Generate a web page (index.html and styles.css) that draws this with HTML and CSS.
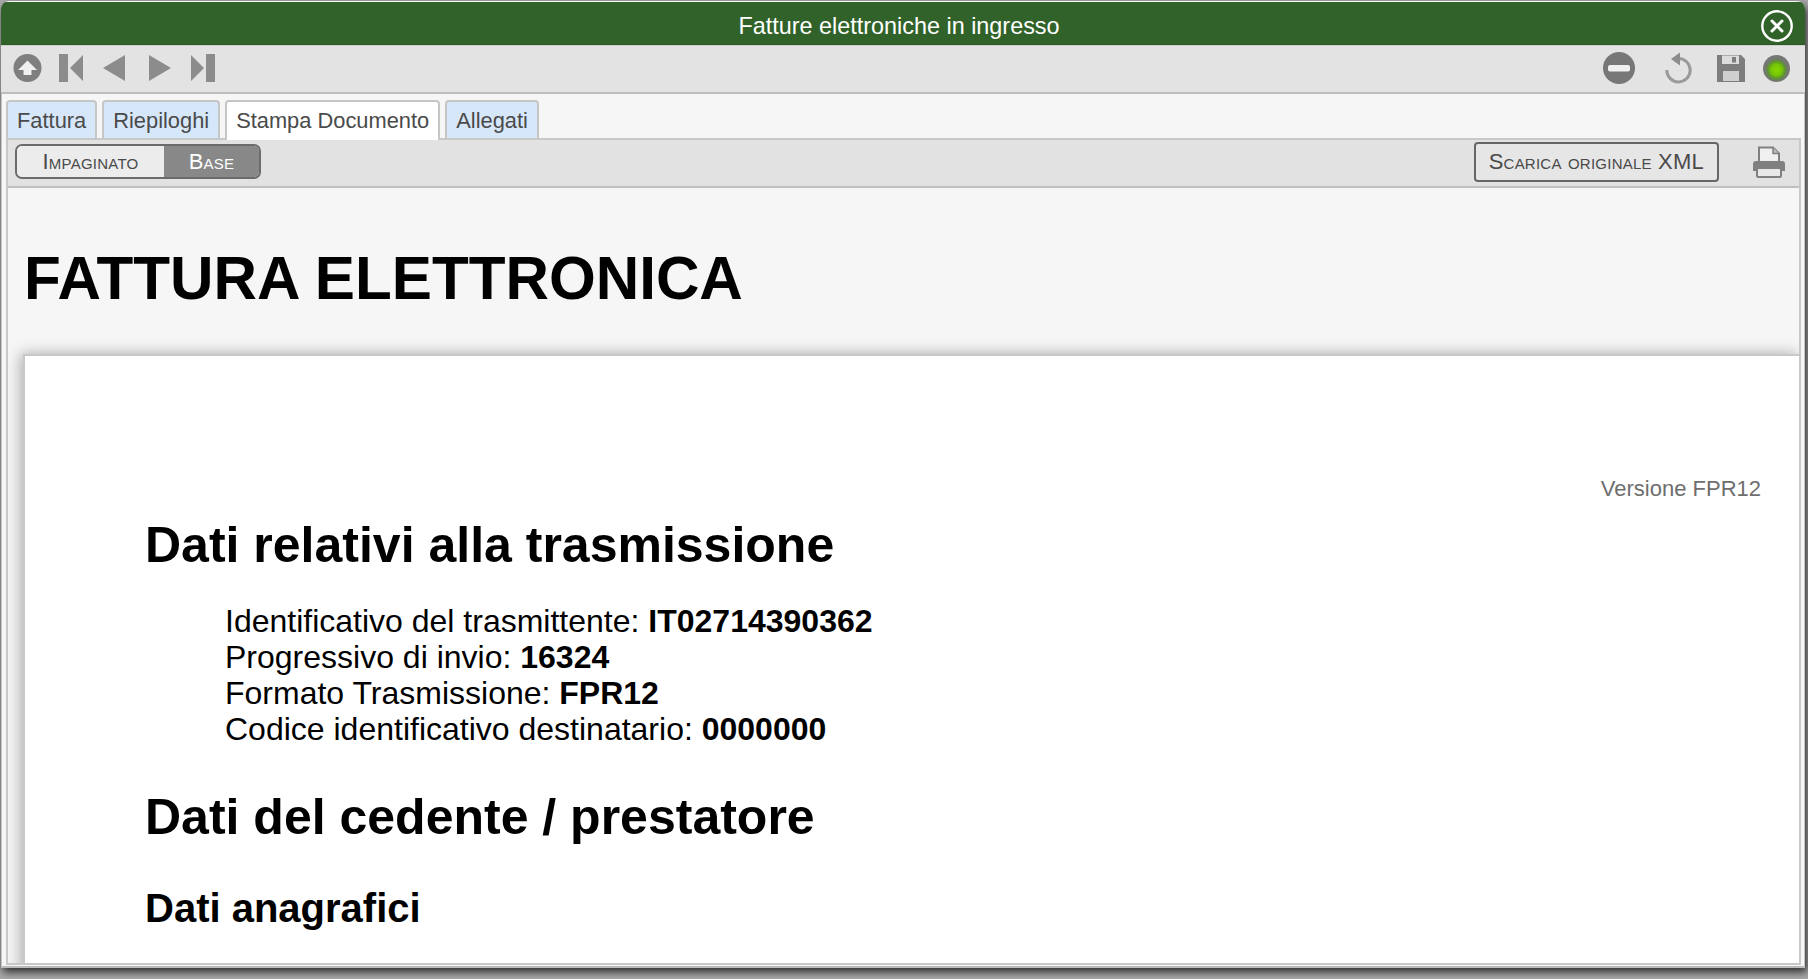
FILE: index.html
```html
<!DOCTYPE html>
<html lang="it">
<head>
<meta charset="utf-8">
<title>Fatture elettroniche in ingresso</title>
<link rel="stylesheet" href="styles.css">
</head>
<body>
<div class="window">
  <header class="titlebar">
    <span class="title">Fatture elettroniche in ingresso</span>
    <svg class="close" width="32" height="32" viewBox="0 0 32 32"><circle cx="16" cy="16" r="14.7" fill="none" stroke="#fff" stroke-width="2.4"/><path d="M11 11l10 10M21 11L11 21" stroke="#fff" stroke-width="3" stroke-linecap="round"/></svg>
  </header>
  <div class="toolbar">
    <div class="tools">
      <svg class="i" width="29" height="28" viewBox="0 0 29 28"><circle cx="14.5" cy="14" r="14" fill="#7f7f7f"/><path d="M14.5 6.5L24 16H18.5V21H10.5V16H5Z" fill="#f0f0f0"/></svg>
      <svg class="i first" width="24" height="28" viewBox="0 0 24 28"><path d="M0 0h9v28H0zM11 14L24 1v26z" fill="#8c8c8c"/></svg>
      <svg class="i prev" width="22" height="28" viewBox="0 0 22 28"><path d="M0 14L22 1v26z" fill="#8c8c8c"/></svg>
      <svg class="i next" width="22" height="28" viewBox="0 0 22 28"><path d="M22 14L0 1v26z" fill="#8c8c8c"/></svg>
      <svg class="i last" width="24" height="28" viewBox="0 0 24 28"><path d="M15 0h9v28h-9zM13 14L0 1v26z" fill="#8c8c8c"/></svg>
    </div>
    <div class="tools-right">
      <svg class="i" width="32" height="32" viewBox="0 0 32 32"><circle cx="16" cy="16" r="16" fill="#777"/><rect x="5" y="13" width="22" height="6.5" rx="2" fill="#f0f0f0"/></svg>
      <svg class="i undo" width="28" height="32" viewBox="0 0 28 32"><path d="M13.5 6.5A11.7 11.7 0 1 1 1.8 18" fill="none" stroke="#9a9a9a" stroke-width="3"/><path d="M15 0.5V13.5L6 7Z" fill="#8c8c8c"/></svg>
      <svg class="i save" width="28" height="27" viewBox="0 0 28 27"><path d="M0 0h24l4 4v23H0z" fill="#7d7d7d"/><rect x="5" y="0.5" width="17" height="8.5" fill="#dcdcdc"/><rect x="15" y="2" width="4" height="5.5" fill="#7d7d7d"/><rect x="6" y="16" width="16" height="10" fill="#cfcfcf"/></svg>
      <span class="led"></span>
    </div>
  </div>
  <nav class="tabs">
    <span class="tab">Fattura</span>
    <span class="tab">Riepiloghi</span>
    <span class="tab active">Stampa Documento</span>
    <span class="tab">Allegati</span>
  </nav>
  <div class="panel">
    <div class="subbar">
      <div class="segmented">
        <span class="seg">Impaginato</span>
        <span class="seg on">Base</span>
      </div>
      <div class="sub-right">
        <span class="btn">Scarica originale XML</span>
        <svg class="printer" width="32" height="32" viewBox="0 0 32 32"><path d="M6 16V1.5H20L26 7.5V16" fill="#f0f0f0" stroke="#808080" stroke-width="2"/><path d="M20 1.5V7.5H26" fill="#bcbcbc" stroke="#808080" stroke-width="1.5"/><path d="M3 15H29Q32 15 32 18V25H0V18Q0 15 3 15Z" fill="#808080"/><rect x="4" y="22" width="24" height="9" rx="1.5" fill="#e8e8e8" stroke="#808080" stroke-width="2"/></svg>
      </div>
    </div>
    <main class="content">
      <h1 class="doc-title">FATTURA ELETTRONICA</h1>
      <section class="paper">
        <div class="version">Versione FPR12</div>
        <h2 class="h-main">Dati relativi alla trasmissione</h2>
        <div class="data">
          <div>Identificativo del trasmittente: <b>IT02714390362</b></div>
          <div>Progressivo di invio: <b>16324</b></div>
          <div>Formato Trasmissione: <b>FPR12</b></div>
          <div>Codice identificativo destinatario: <b>0000000</b></div>
        </div>
        <h2 class="h-main second">Dati del cedente / prestatore</h2>
        <h3 class="h-sub">Dati anagrafici</h3>
      </section>
    </main>
  </div>
</div>
</body>
</html>
```
FILE: styles.css
```css
* { box-sizing: border-box; }
html, body { height: 100%; }
body {
  margin: 0;
  overflow: hidden;
  background: #a9a9a9;
  font-family: "Liberation Sans", Arial, sans-serif;
  padding: 1px 3px 0 1px;
}
.window {
  height: 967px;
  display: flex;
  flex-direction: column;
  background: #f6f6f6;
  border-radius: 8px 8px 0 0;
  overflow: hidden;
  box-shadow: 2px 4px 8px rgba(0,0,0,.75), inset 1px 0 #c4c4c4, inset -1px 0 #c4c4c4, inset 0 -2px #bbb;
  padding: 1px 0 0;
}
.titlebar {
  position: relative;
  flex: none;
  height: 43px;
  padding: 8px 8px 0 0;
  background: #31622a;
  display: flex;
  align-items: center;
  justify-content: center;
  border-bottom: 1px solid #2b5725;
}
.title { color: #fff; font-size: 23.4px; line-height: 1; }
.close { position: absolute; right: 12px; top: 8px; }
.toolbar {
  flex: none;
  height: 49px;
  background: #e3e3e3;
  border-top: 1px solid #d0d0d0;
  border-bottom: 2px solid #bdbdbd;
  display: flex;
  align-items: center;
  justify-content: space-between;
  padding: 0 15px 2px 12px;
}
.i { filter: blur(.4px); }
.tools { display: flex; align-items: center; }
.first { margin-left: 17px; }
.prev { margin-left: 20px; }
.next { margin-left: 24px; }
.last { margin-left: 20px; }
.tools-right { display: flex; align-items: center; }
.undo { margin-left: 30px; }
.save { margin-left: 24px; }
.led {
  width: 27px; height: 27px; margin-left: 18px; border-radius: 50%;
  background: radial-gradient(circle closest-side at 50% 55%, #84d600 0, #76c606 45%, #5f9a28 68%, #6c7d62 86%, #777 100%);
  filter: blur(.4px);
}
.tabs {
  flex: none;
  display: flex;
  gap: 5px;
  padding: 6px 0 0 5px;
  height: 44px;
  position: relative;
  z-index: 1;
}
.tab {
  height: 38px;
  padding: 0 9px;
  background: #d7e7fa;
  border: 2px solid #c6c6c6;
  border-bottom: none;
  border-radius: 4px 4px 0 0;
  font-size: 21.85px;
  line-height: 38px;
  color: #4a4a4a;
}
.tab.active { background: #fff; height: 40px; }
.panel {
  flex: 1;
  min-height: 0;
  margin: 0 4px 3px 5px;
  border: 2px solid #c8c8c8;
  display: flex;
  flex-direction: column;
  overflow: hidden;
}
.subbar {
  flex: none;
  height: 48px;
  background: #e2e2e2;
  border-bottom: 2px solid #c0c0c0;
  display: flex;
  align-items: center;
  justify-content: space-between;
  padding: 0 14px 3px 7px;
}
.segmented {
  display: flex;
  height: 35px;
  border: 2px solid #6b6b6b;
  border-radius: 7px;
  overflow: hidden;
  font-variant: small-caps;
  font-size: 22px;
  letter-spacing: .23px;
}
.seg { width: 147px; background: #ececec; color: #4a4a4a; text-align: center; line-height: 31px; }
.seg.on { width: 95px; background: #888; color: #fff; }
.sub-right { display: flex; align-items: center; gap: 34px; }
.btn {
  height: 40px;
  padding: 0 13px;
  border: 2px solid #666;
  border-radius: 4px;
  background: #e6e6e6;
  color: #4a4a4a;
  font-variant: small-caps;
  font-size: 22px;
  letter-spacing: .23px;
  line-height: 36px;
}
.content { flex: 1; min-height: 0; padding: 0 0 0 15px; overflow: hidden; }
.doc-title {
  margin: 0 0 0 1px;
  padding-top: 56px;
  height: 166px;
  font-size: 60.2px;
  line-height: 70px;
  font-weight: bold;
  color: #000;
}
.paper {
  height: 700px;
  background: #fff;
  border-top: 2px solid #c8c8c8;
  border-left: 2px solid #c8c8c8;
  box-shadow: -2px 0 14px rgba(0,0,0,.32);
  padding: 120px 38px 0 120px;
  color: #000;
}
.version { text-align: right; color: #6e6e6e; font-size: 22px; line-height: 26px; }
.h-main { margin: 15px 0 0; font-size: 50px; line-height: 56px; font-weight: bold; }
.data { margin: 30px 0 0 80px; font-size: 32px; line-height: 36px; }
.h-main.second { margin-top: 42px; }
.h-sub { margin: 41px 0 0; font-size: 40px; line-height: 44px; font-weight: bold; }
```
